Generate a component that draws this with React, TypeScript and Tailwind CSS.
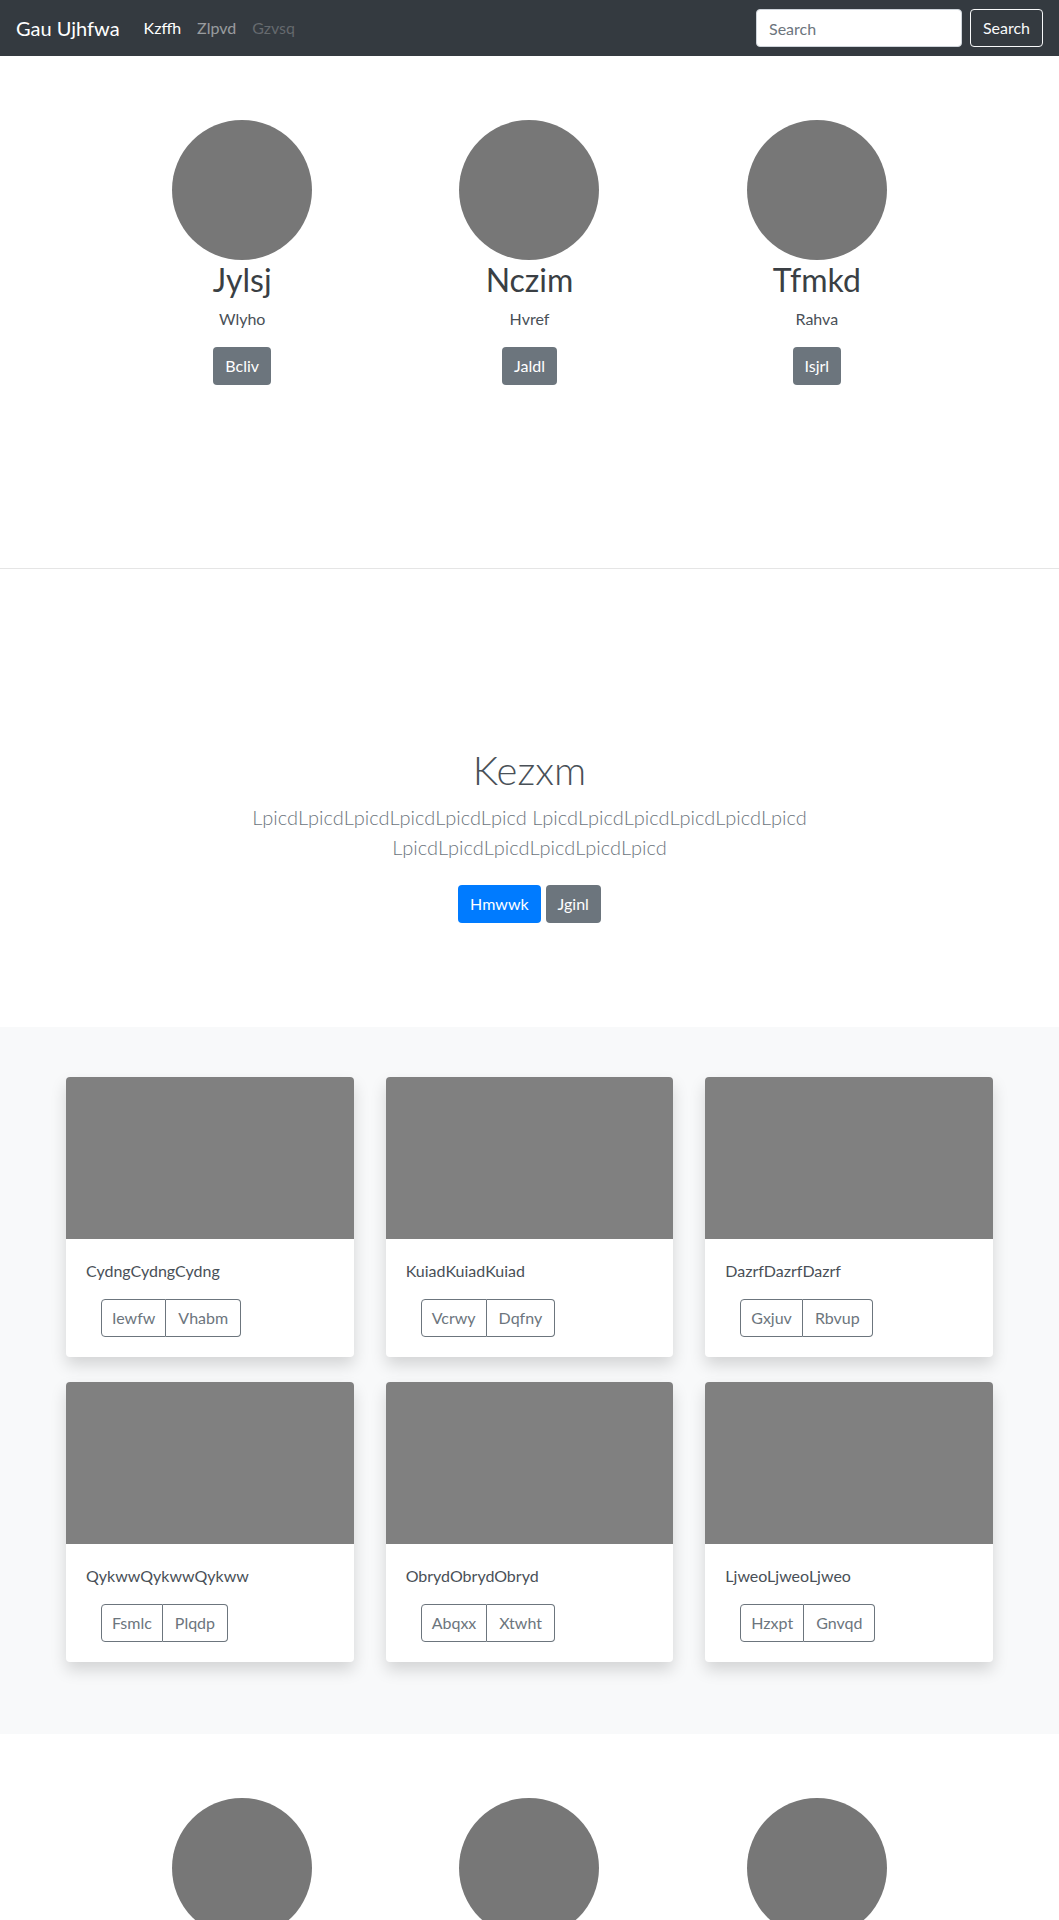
import React from "react";

const font = { fontFamily: "Lato, 'Open Sans', 'Noto Sans', sans-serif" };

function Profile({ name, sub, btn }: { name: string; sub: string; btn: string }) {
  return (
    <div className="flex flex-col items-center text-center">
      <div className="w-[140px] h-[140px] rounded-full bg-[#777777]" />
      <h2 className="text-[32px] leading-[38px] font-normal text-[#3a3f44] mt-px mb-[8px]">{name}</h2>
      <p className="text-[16px] leading-[24px] text-[#495057] mb-[16px]">{sub}</p>
      <button className="h-[38px] px-[12px] rounded-[4px] bg-[#6c757d] text-white text-[16px] leading-[24px]">
        {btn}
      </button>
    </div>
  );
}

function Card({ title, a, b }: { title: string; a: string; b: string }) {
  return (
    <div className="bg-white rounded-[4px] overflow-hidden shadow-[0_8px_16px_rgba(0,0,0,0.15)]">
      <div className="h-[162px] bg-[#808080]" />
      <div className="p-[20px]">
        <p className="text-[16px] leading-[24px] text-[#495057] mb-[16px]">{title}</p>
        <div className="ml-[15px] inline-flex h-[38px] text-[16px] leading-[24px] text-[#6c757d]">
          <span className="flex items-center px-[10px] border border-[#6c757d] rounded-l-[4px]">{a}</span>
          <span className="flex items-center px-[12px] border border-l-0 border-[#6c757d] rounded-r-[4px]">{b}</span>
        </div>
      </div>
    </div>
  );
}

export default function App() {
  const cards = [
    { title: "CydngCydngCydng", a: "Iewfw", b: "Vhabm" },
    { title: "KuiadKuiadKuiad", a: "Vcrwy", b: "Dqfny" },
    { title: "DazrfDazrfDazrf", a: "Gxjuv", b: "Rbvup" },
    { title: "QykwwQykwwQykww", a: "Fsmlc", b: "Plqdp" },
    { title: "ObrydObrydObryd", a: "Abqxx", b: "Xtwht" },
    { title: "LjweoLjweoLjweo", a: "Hzxpt", b: "Gnvqd" },
  ];
  return (
    <div style={font} className="w-full bg-white text-[#212529]">
      {/* Navbar */}
      <nav className="h-[56px] bg-[#343a40] flex items-center px-[16px]">
        <span className="text-[20px] leading-[30px] text-white mr-[16px]">Gau Ujhfwa</span>
        <div className="flex text-[16px] leading-[24px]">
          <span className="px-[8px] text-white">Kzffh</span>
          <span className="px-[8px] text-white/50">Zlpvd</span>
          <span className="px-[8px] text-white/25">Gzvsq</span>
        </div>
        <div className="ml-auto flex items-center gap-[8px]">
          <input
            placeholder="Search"
            className="w-[206px] h-[38px] rounded-[4px] bg-white border border-[#ced4da] px-[12px] text-[16px] text-[#495057] placeholder:text-[#6c757d] outline-none"
          />
          <button className="w-[73px] h-[38px] rounded-[4px] border border-[#f8f9fa] text-[#f8f9fa] text-[16px] leading-[24px]">
            Search
          </button>
        </div>
      </nav>

      {/* Top marketing */}
      <section className="h-[512px] pt-[64px]">
        <div className="w-[862px] mx-auto grid grid-cols-3">
          <Profile name="Jylsj" sub="Wlyho" btn="Bcliv" />
          <Profile name="Nczim" sub="Hvref" btn="Jaldl" />
          <Profile name="Tfmkd" sub="Rahva" btn="Isjrl" />
        </div>
      </section>
      <div className="border-t border-[#e5e5e5]" />

      {/* Jumbotron */}
      <section className="pt-[177px] pb-[104px] text-center">
        <h1 className="text-[40px] leading-[48px] font-light text-[#495057] mb-[8px]">Kezxm</h1>
        <p className="text-[20px] leading-[30px] font-light text-[#6c757d] mb-[23px]">
          LpicdLpicdLpicdLpicdLpicdLpicd LpicdLpicdLpicdLpicdLpicdLpicd
          <br />
          LpicdLpicdLpicdLpicdLpicdLpicd
        </p>
        <div className="flex justify-center gap-[5px]">
          <button className="h-[38px] px-[12px] rounded-[4px] bg-[#007bff] text-white text-[16px] leading-[24px]">
            Hmwwk
          </button>
          <button className="h-[38px] px-[12px] rounded-[4px] bg-[#6c757d] text-white text-[16px] leading-[24px]">
            Jginl
          </button>
        </div>
      </section>

      {/* Album */}
      <section className="bg-[#f8f9fa] pt-[50px] pb-[48px]">
        <div className="w-[927px] mx-auto grid grid-cols-3 gap-x-[32px] gap-y-[25px] pb-[24px]">
          {cards.map((c) => (
            <Card key={c.title} {...c} />
          ))}
        </div>
      </section>

      {/* Bottom marketing */}
      <section className="h-[512px] pt-[64px]">
        <div className="w-[862px] mx-auto grid grid-cols-3">
          <div className="flex justify-center"><div className="w-[140px] h-[140px] rounded-full bg-[#777777]" /></div>
          <div className="flex justify-center"><div className="w-[140px] h-[140px] rounded-full bg-[#777777]" /></div>
          <div className="flex justify-center"><div className="w-[140px] h-[140px] rounded-full bg-[#777777]" /></div>
        </div>
      </section>
    </div>
  );
}
